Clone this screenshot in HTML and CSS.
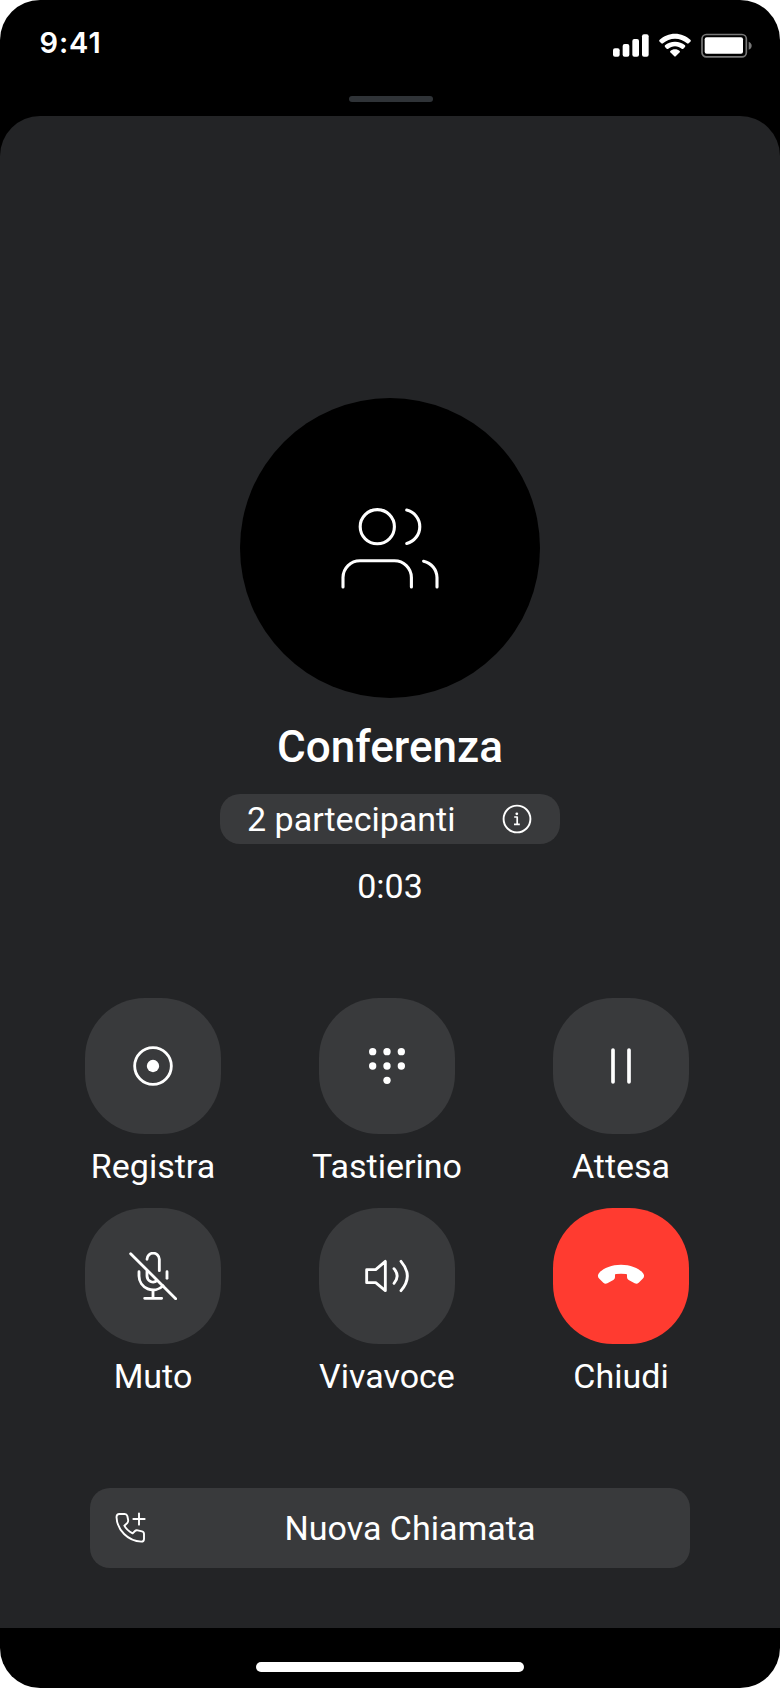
FILE: index.html
```html
<!DOCTYPE html>
<html lang="it">
<head>
<meta charset="utf-8">
<title>Conferenza</title>
<link rel="stylesheet" href="styles.css">
</head>
<body>
<div class="screen">
  <header class="status">
    <span class="time">9:41</span>
    <div class="indicators">
      <svg class="signal" viewBox="0 0 108 75"><rect x="0" y="46" width="20" height="25" rx="6"/><rect x="29" y="33" width="20" height="38" rx="6"/><rect x="58" y="18" width="20" height="53" rx="6"/><rect x="87" y="4" width="20" height="67" rx="6"/></svg>
      <svg class="wifi" viewBox="0 0 96 75"><path d="M48 2C66 2 82 9 94 20Q97 23 94 26L89 31Q87 33 84 31C74 22 62 17 48 17S22 22 12 31Q9 33 7 31L2 26Q-1 23 2 20C14 9 30 2 48 2Z"/><path d="M48 26C60 26 70 30 78 37Q80 39 78 42L73 47Q71 49 68 47C62 43 56 40 48 40S34 43 28 47Q25 49 23 47L18 42Q16 39 18 37C26 30 36 26 48 26Z"/><path d="M48 49C54 49 58 51 62 54Q64 56 62 58L50 70Q48 72 46 70L34 58Q32 56 34 54C38 51 42 49 48 49Z"/></svg>
      <svg class="battery" viewBox="0 0 153 75"><rect class="case" x="3" y="4.5" width="133" height="67" rx="13"/><rect x="11" y="13" width="115" height="49" rx="6"/><path class="nub" d="M143 26C149 28 152 33 152 38S149 48 143 50Z"/></svg>
    </div>
  </header>
  <div class="grabber-row"><span class="grabber"></span></div>

  <main class="sheet">
    <div class="avatar">
      <svg class="line people" viewBox="340 500 100 96"><circle cx="377.3" cy="526.7" r="17.1"/><path d="M406.7 510A17.2 17.2 0 0 1 406.7 543.4"/><path d="M343 587V577.5A17 17 0 0 1 360 560.7H394.4A17 17 0 0 1 411.4 577.5V587"/><path d="M423.6 561.2A17 17 0 0 1 437 577.5V587"/></svg>
    </div>
    <h1 class="title">Conferenza</h1>
    <button class="participants">
      <span>2 partecipanti</span>
      <svg class="line info" viewBox="502 804 30 30"><circle cx="517" cy="819" r="13.4"/><path class="i-stroke" d="M514.2 817H517.2V824.2M514 824.3H519.8"/><circle class="fill" cx="516.8" cy="813.8" r="1.4"/></svg>
    </button>
    <div class="timer">0:03</div>

    <div class="controls">
      <div class="control">
        <button class="key"><svg class="line icon" viewBox="0 0 144 144"><circle cx="72" cy="72" r="55"/><circle class="fill" cx="72" cy="72" r="18.5"/></svg></button>
        <span class="label">Registra</span>
      </div>
      <div class="control">
        <button class="key"><svg class="icon" viewBox="0 0 144 144"><circle cx="29" cy="29" r="11"/><circle cx="72" cy="29" r="11"/><circle cx="115" cy="29" r="11"/><circle cx="29" cy="72" r="11"/><circle cx="72" cy="72" r="11"/><circle cx="115" cy="72" r="11"/><circle cx="72" cy="115" r="11"/></svg></button>
        <span class="label">Tastierino</span>
      </div>
      <div class="control">
        <button class="key"><svg class="line icon pause" viewBox="0 0 144 144"><path d="M48 24V120M96 24V120"/></svg></button>
        <span class="label">Attesa</span>
      </div>
      <div class="control">
        <button class="key"><svg class="line icon" viewBox="0 0 144 144"><path d="M5 5L140 140"/><path d="M54 22A18.5 18.5 0 0 1 91 22V56"/><path d="M54 58V72A18.5 18.5 0 0 0 84 86"/><path d="M30 59V72A42 42 0 0 0 102 101"/><path d="M114 59V79"/><path d="M72 115V139M47 139H98"/></svg></button>
        <span class="label">Muto</span>
      </div>
      <div class="control">
        <button class="key"><svg class="line icon" viewBox="0 0 144 144"><path d="M11 53H38L67 28V116L38 92H11Z"/><path d="M93 50Q112 72 93 94"/><path d="M114 28Q152 72 114 116"/></svg></button>
        <span class="label">Vivavoce</span>
      </div>
      <div class="control">
        <button class="key hangup"><svg class="icon" viewBox="0 0 144 144"><path d="M3 70C5 56 37 38 72 38S139 56 141 70Q142 75 137 80L125 92Q120 97 113 94L95 84Q90 81 90 76V68Q90 66 87 66Q72 64 57 66Q54 66 54 68V76Q54 81 49 84L31 94Q24 97 19 92L7 80Q2 75 3 70Z"/></svg></button>
        <span class="label">Chiudi</span>
      </div>
    </div>

    <button class="new-call">
      <svg class="line add-call" viewBox="135 126 93 96"><path d="M148 132H164Q170 132 172 138L174.500 150Q175 155 172 159L163 167Q170 181 188 190L195 183Q198 180 203 181L216 184Q222 185.500 222 192V207Q222 215 214 215C174 213 141 180 139.500 141Q140 132 148 132Z"/><path d="M207 130V164M190 147H224"/></svg>
      <span class="new-label">Nuova Chiamata</span>
    </button>
  </main>
  <footer class="home"><span class="home-bar"></span></footer>
</div>
</body>
</html>
```

FILE: styles.css
```css
* { box-sizing: border-box; }
body { margin: 0; background: #fff; font-family: Roboto, "Liberation Sans", sans-serif; color: #fff; }
button { border: 0; margin: 0; padding: 0; font: inherit; color: inherit; }
svg { display: block; fill: #fff; }
.screen { width: 780px; height: 1688px; background: #000; border-radius: 40px; overflow: hidden; display: flex; flex-direction: column; }
.status { height: 90px; flex: none; display: flex; justify-content: space-between; align-items: flex-start; padding: 25px 28px 0 39.5px; }
.time { font: 600 29px/36px Inter, sans-serif; letter-spacing: 0.9px; }
.indicators { display: flex; padding-top: 8px; }
.signal { width: 36px; height: 25px; }
.wifi { width: 32px; height: 25px; margin-left: 10px; }
.battery { width: 51px; height: 25px; margin-left: 10.3px; }
.case { fill: none; stroke: #777; stroke-width: 5; }
.nub { fill: #777; }
.grabber-row { height: 26px; flex: none; display: flex; justify-content: center; padding: 6px 0 0 2px; }
.grabber { width: 84px; height: 6px; border-radius: 3px; background: #2f3337; }
.sheet { height: 1512px; flex: none; background: #232426; border-radius: 40px 40px 0 0; display: flex; flex-direction: column; align-items: center; padding-top: 282px; }
.avatar { width: 300px; height: 300px; flex: none; border-radius: 50%; background: #000; display: grid; place-items: center; }
.people { width: 100px; height: 96px; }
.line { fill: none; stroke: #fff; stroke-width: 8.5; stroke-linecap: round; stroke-linejoin: round; }
.line.people { stroke-width: 3.1; }
.fill { fill: #fff; stroke: none; }
.title { margin: 22px 0 0; font-size: 44px; font-weight: 500; line-height: 54px; }
.participants { margin-top: 20px; width: 340px; height: 50px; border-radius: 20px; background: #393a3c; display: flex; align-items: center; justify-content: space-between; padding: 0 28px 0 27px; font-size: 34px; line-height: 50px; }
.info { width: 30px; height: 30px; }
.line.info { stroke-width: 1.9; }
.i-stroke { stroke-width: 1.7; stroke-linecap: butt; }
.timer { margin-top: 22px; font-size: 34px; line-height: 40px; }
.controls { margin-top: 92px; margin-right: 6px; display: grid; grid-template-columns: repeat(3, 136px); column-gap: 98px; row-gap: 22px; }
.control { height: 188px; display: flex; flex-direction: column; align-items: center; }
.key { width: 136px; height: 136px; flex: none; border-radius: 60px; background: #393a3c; display: grid; place-items: center; }
.hangup { background: #ff3b30; }
.icon { width: 48px; height: 48px; }
.line.pause { stroke-width: 11; }
.label { margin-top: 12px; font-size: 34px; line-height: 40px; white-space: nowrap; }
.new-call { margin-top: 92px; width: 600px; height: 80px; border-radius: 20px; background: #393a3c; display: flex; align-items: center; padding: 0 25px; font-size: 34px; line-height: 40px; }
.add-call { width: 31px; height: 32px; }
.line.add-call { stroke-width: 5.7; }
.new-label { flex: 1; text-align: center; padding-left: 9px; }
.home { flex: 1; display: flex; justify-content: center; padding-top: 34px; }
.home-bar { width: 268px; height: 10px; border-radius: 5px; background: #fff; }
```
